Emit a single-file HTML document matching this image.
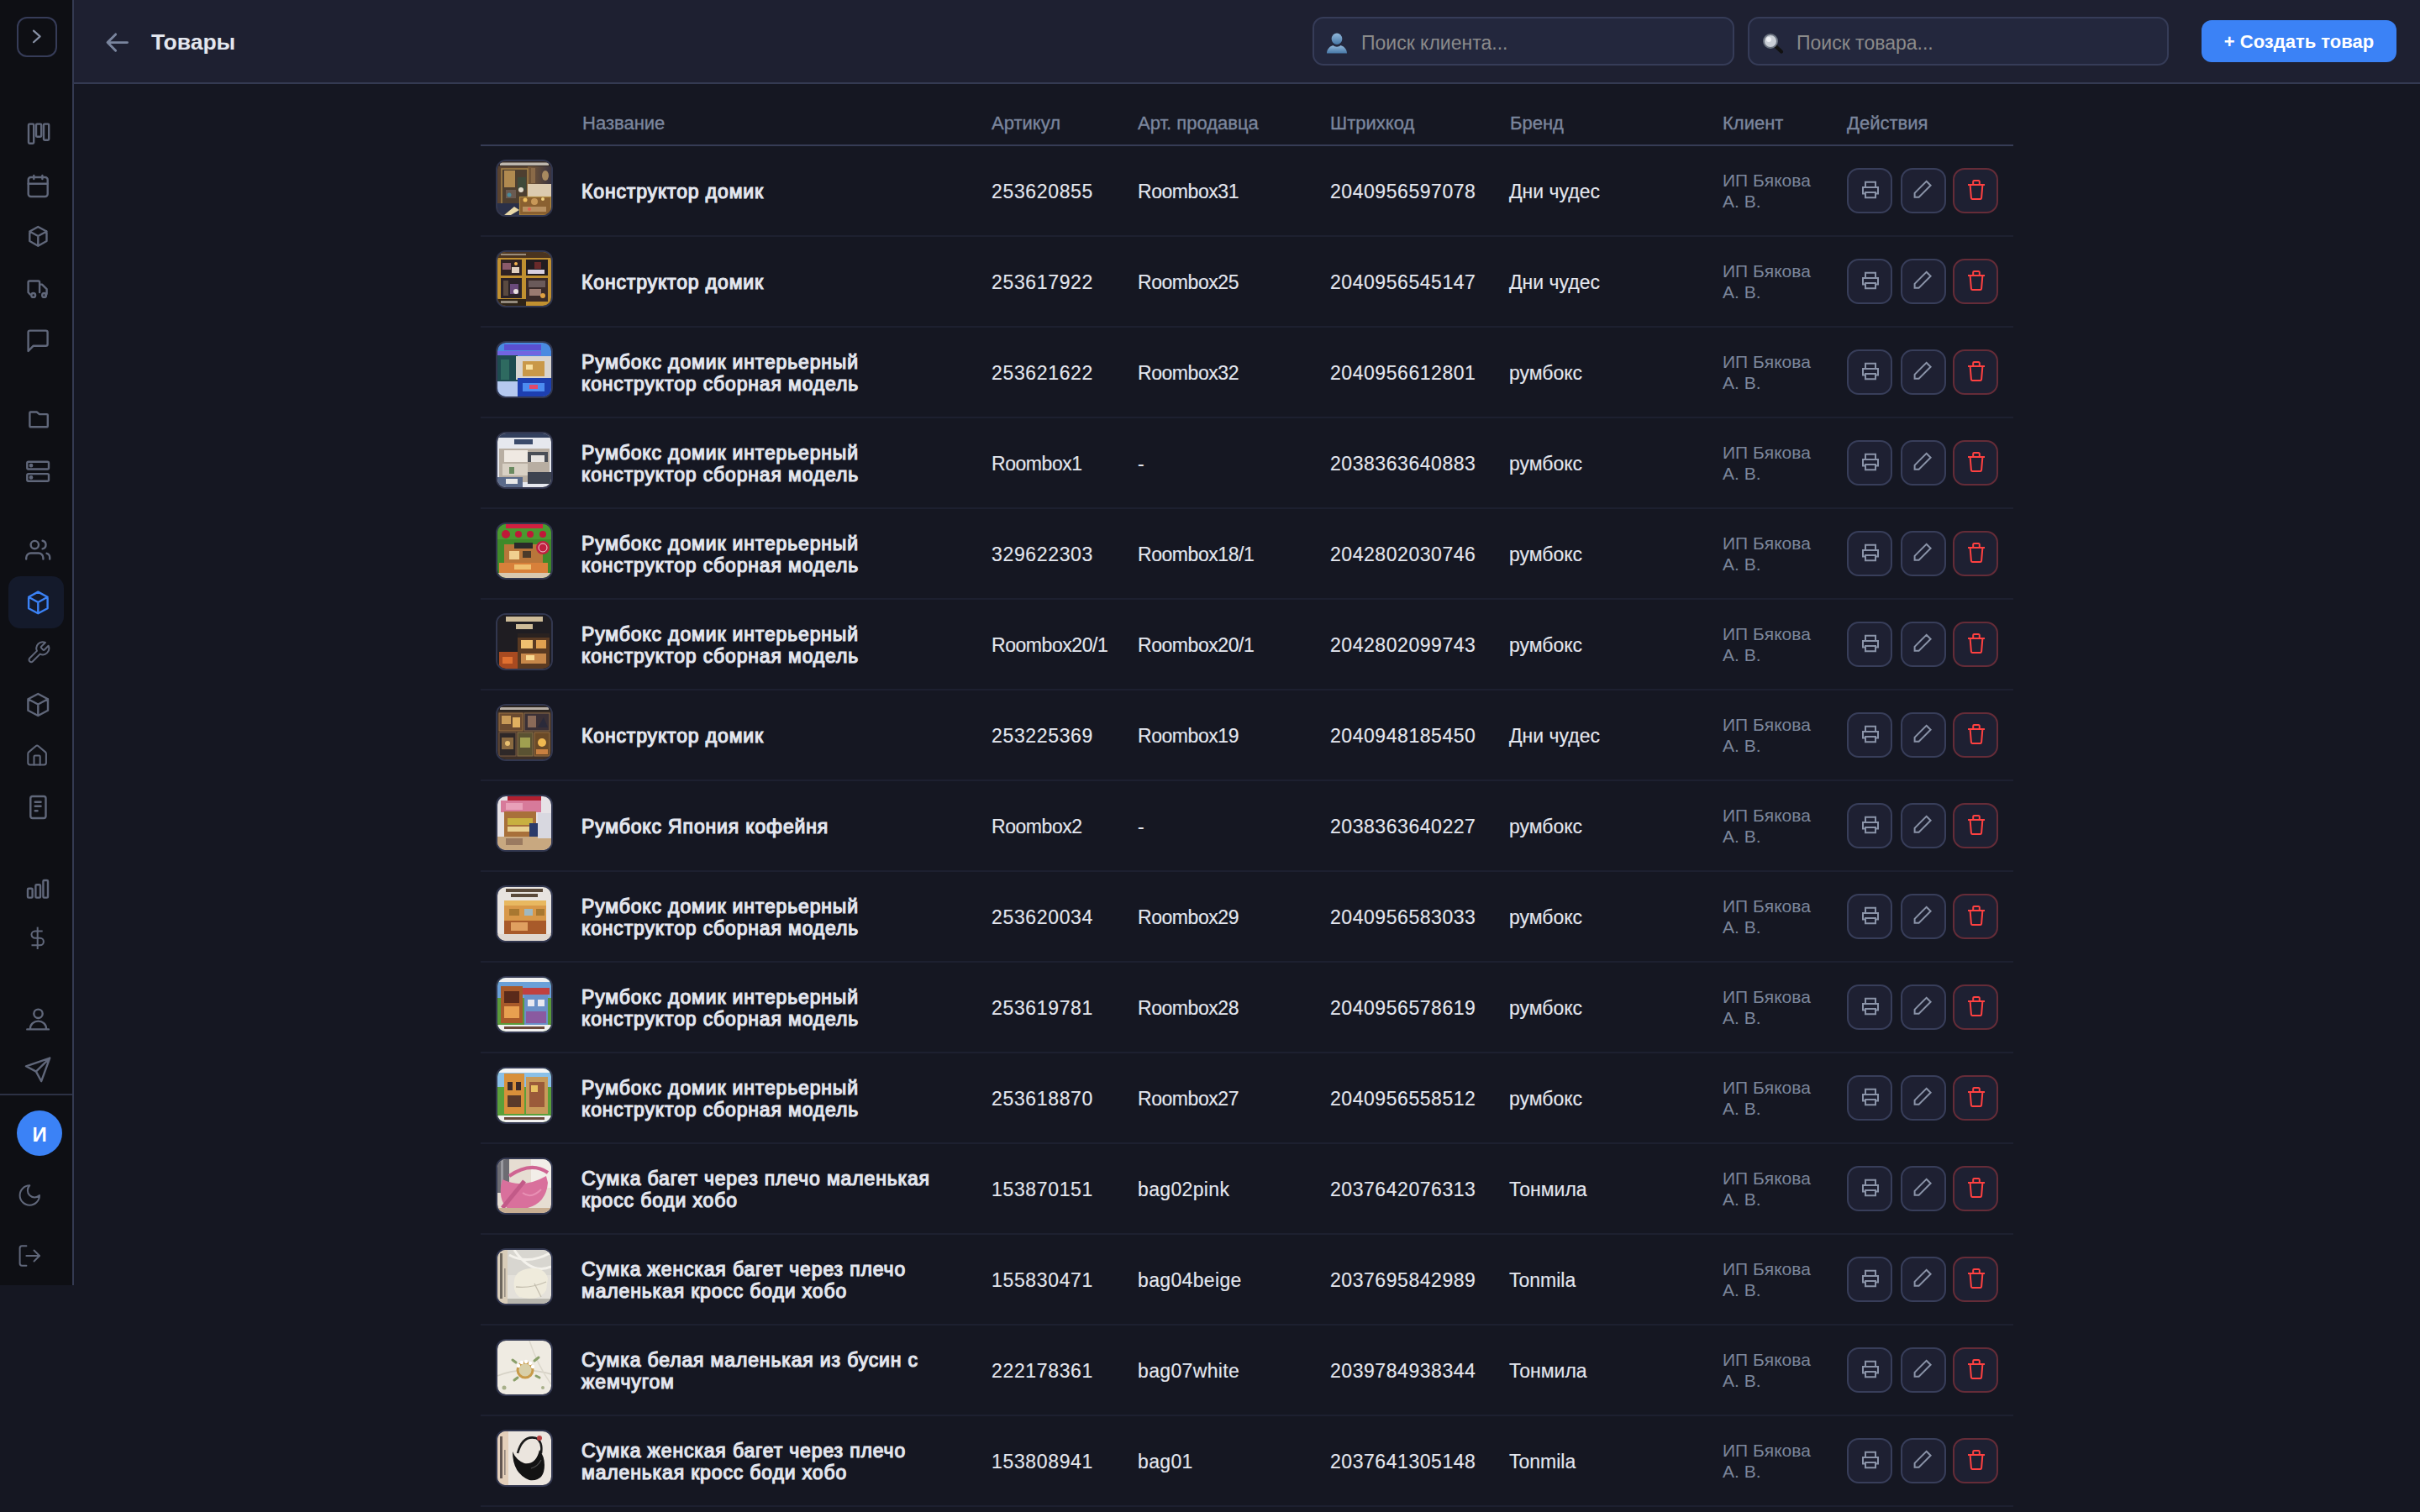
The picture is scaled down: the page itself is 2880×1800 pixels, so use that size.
<!DOCTYPE html>
<html><head><meta charset="utf-8">
<style>
*{box-sizing:border-box;margin:0;padding:0}
html,body{width:2880px;height:1800px;overflow:hidden;background:#151722;font-family:"Liberation Sans",sans-serif}
.side{position:absolute;left:0;top:0;width:88px;height:1530px;background:#0e0f14;border-right:2px solid #343a52}
.side svg{position:absolute;fill:none;stroke:#60677a;stroke-width:2.4;stroke-linecap:round;stroke-linejoin:round}
.tog{position:absolute;left:20px;top:20px;width:48px;height:48px;border:2px solid #363c58;border-radius:12px}
.act{position:absolute;left:10px;top:686px;width:66px;height:62px;border-radius:14px;background:#141a2b}
.sdiv{position:absolute;left:0;top:1302px;width:86px;height:2px;background:#2c3144}
.ava{position:absolute;left:20px;top:1322px;width:54px;height:54px;border-radius:50%;background:#3b82f6;color:#fff;font-weight:700;font-size:24px;text-align:center;line-height:58px}
.hdr{position:absolute;left:88px;top:0;width:2792px;height:100px;background:#1e2031;border-bottom:2px solid #343a52}
.title{position:absolute;left:92px;top:30px;font-size:26.5px;font-weight:700;color:#e3e6ee;line-height:40px;white-space:nowrap}
.inp{position:absolute;top:20px;height:58px;border:2px solid #363c58;border-radius:13px;background:#23273d}
.ph{position:absolute;top:1.5px;line-height:54px;font-size:23px;color:#8b8b8b;white-space:nowrap}
.btnc{position:absolute;left:2620px;top:24px;width:232px;height:50px;border-radius:12px;background:#3b82f6;color:#fff;font-weight:700;font-size:22px;line-height:52px;text-align:center;white-space:nowrap}
.tbl{position:absolute;left:572px;top:0;width:1824px}
.th{position:absolute;top:124px;font-size:22px;color:#7b869d;line-height:46px;white-space:nowrap;-webkit-text-stroke:0.35px #7b869d}
.thline{position:absolute;left:572px;top:172px;width:1824px;height:2px;background:#363c55}
.row{position:absolute;left:572px;width:1824px;height:108px;border-bottom:2px solid #1d2030}
.c{position:absolute;top:1.5px;height:106px;display:flex;align-items:center;font-size:23px;line-height:26.4px;color:#e3e6ee;white-space:nowrap}
.nm{left:120px;font-weight:400;letter-spacing:0.85px}
.c{-webkit-text-stroke:0.15px #e3e6ee}
.nm{-webkit-text-stroke:1.2px #e3e6ee;line-height:26px;top:0.5px}
.a1{left:608px}
.a2{left:782px}
.a3{left:1011px;letter-spacing:.55px}
.dg{letter-spacing:.65px}
.al{letter-spacing:-.45px}
.bg{letter-spacing:.35px}
.a4{left:1224px}
.a5{left:1478px;top:0;font-size:21px;line-height:25.4px;color:#7b869b;-webkit-text-stroke:0}
.th1{position:absolute;left:18px;top:16px;width:68px;height:68px;border:2px solid #32374f;border-radius:12px;overflow:hidden}
.b{position:absolute;top:26px;width:54px;height:54px;border:2px solid #383e5a;border-radius:14px;background:#1e2032}
.b svg{position:absolute;left:0;top:0;fill:none;stroke:#8a93a8;stroke-width:2}
.b1{left:1626px}.b2{left:1690px}.b3{left:1752px;border-color:#652c38}
.b3 svg{stroke:#ff4141}
</style></head><body>
<div class="side">
  <div class="tog"></div>
  <div class="act"></div>
  <div class="sdiv"></div>
  <div class="ava">И</div>
  <svg width="86" height="1530" viewBox="0 0 86 1530" style="left:0;top:0">
    <path d="M40 36.6l7.6 6.8-7.6 6.8" style="stroke:#8790a5;stroke-width:2.2"/>
    <rect x="34" y="147.6" width="6.2" height="23.2" rx="1.2"/>
    <rect x="43" y="147.6" width="6.2" height="15.2" rx="1.2"/>
    <rect x="52" y="147.6" width="6.2" height="19.2" rx="1.2"/>
    <rect x="33.7" y="211" width="23" height="23" rx="3"/>
    <path d="M40.3 209v4M50.4 209v4M33.7 218.7h23"/>
    <path d="M45.3 270l10.2 5.5v11.5l-10.2 5.7-10-5.7v-11.5z M35.3 275.5l10 5.5 10.2-5.5 M45.3 281v11.7"/>
    <path d="M33.6 348v-12a1.5 1.5 0 0 1 1.5-1.5h10.5a1.5 1.5 0 0 1 1.5 1.5v12M47 338.6h3l5.6 5.6v5.6l-1.5 1.5M33.6 348l2.2 2.5"/>
    <circle cx="39.7" cy="351.4" r="2.4"/><circle cx="52.6" cy="351.4" r="2.4"/>
    <path d="M33.6 418V395.6a2 2 0 0 1 2-2h19a2 2 0 0 1 2 2v14.2a2 2 0 0 1-2 2H39.5z"/>
    <path d="M35.4 507.3V491.5a1 1 0 0 1 1-1h7.3l3.2 2.6h8.9a1 1 0 0 1 1 1v13.2a1 1 0 0 1-1 1H36.4a1 1 0 0 1-1-1z"/>
    <rect x="32.3" y="549.8" width="25.7" height="8.7" rx="1.5"/><rect x="32.3" y="564.1" width="25.7" height="8.7" rx="1.5"/>
    <circle cx="37" cy="554.2" r="1.2" style="fill:#646b7e"/><circle cx="37" cy="568.4" r="1.2" style="fill:#646b7e"/>
    <circle cx="41.3" cy="648.6" r="4.7"/><path d="M31.2 665.6v-1.6a5.5 5.5 0 0 1 5.5-5.5h9.2a5.5 5.5 0 0 1 5.5 5.5v1.6M50.6 643.8a4.9 4.9 0 0 1 0 9.6M55.6 658.8a5 5 0 0 1 3.6 4.8v2"/>
    <path d="M45.3 704.6l11.3 6.2v13.4l-11.3 6.1-11.2-6.1v-13.4z M34.1 710.8l11.2 6.2 11.3-6.2 M45.3 717v12.9" style="stroke:#3b82f6;stroke-width:2.4"/>
    <g transform="translate(30.8 761.8) scale(1.25)" style="stroke-width:1.6"><path d="M14.7 6.3a1 1 0 0 0 0 1.4l1.6 1.6a1 1 0 0 0 1.4 0l3.77-3.77a6 6 0 0 1-7.94 7.94l-6.91 6.91a2.12 2.12 0 0 1-3-3l6.91-6.91a6 6 0 0 1 7.94-7.94l-3.76 3.76z"/></g>
    <path d="M45.3 826l11.7 6.2v13.6l-11.7 6.2-11.9-6.2v-13.6z M33.4 832.2l11.9 6.3 11.7-6.3 M45.3 838.5v13.4"/>
    <g transform="translate(29.7 885.2) scale(1.2)" style="stroke-width:1.7"><path d="M15 21v-8a1 1 0 0 0-1-1h-4a1 1 0 0 0-1 1v8"/><path d="M3 10a2 2 0 0 1 .709-1.528l7-5.999a2 2 0 0 1 2.582 0l7 5.999A2 2 0 0 1 21 10v9a2 2 0 0 1-2 2H5a2 2 0 0 1-2-2z"/></g>
    <rect x="36.3" y="948" width="18.2" height="26" rx="2.5"/>
    <path d="M41.7 954.8h6.9M41.7 959.8h6.9M41.7 965.3h2.9"/>
    <rect x="33" y="1057.8" width="5.6" height="10.8" rx="1.2"/><rect x="42.4" y="1053.3" width="5.6" height="15.3" rx="1.2"/><rect x="51.4" y="1048" width="5.6" height="20.6" rx="1.2"/>
    <g transform="translate(30.3 1102.4) scale(1.2)" style="stroke-width:1.7;stroke-linecap:butt"><path d="M12 1v22"/><path d="M17 5H9.5a3.5 3.5 0 0 0 0 7h5a3.5 3.5 0 0 1 0 7H6"/></g>
    <circle cx="45.5" cy="1206.8" r="5.2"/><path d="M36 1224.6a9.5 9 0 0 1 19 0M32.3 1225.4h25.6"/>
    <path d="M31 1269.3L59.2 1259.6L49.2 1287.2L42.9 1275.6Z M42.9 1275.6L59.2 1259.6"/>
    <g transform="translate(19.7 1407.4) scale(1.3)" style="stroke-width:1.55"><path d="M12 3a6 6 0 0 0 9 9 9 9 0 1 1-9-9Z"/></g>
    <g transform="translate(19.7 1479.4) scale(1.3)" style="stroke-width:1.55"><path d="M9 21H5a2 2 0 0 1-2-2V5a2 2 0 0 1 2-2h4"/><path d="m16 17 5-5-5-5"/><path d="M21 12H9"/></g>
  </svg>
</div>
<div class="hdr">
  <svg width="40" height="40" viewBox="0 0 40 40" style="position:absolute;left:32px;top:30px;fill:none;stroke:#7a859e;stroke-width:2.9;stroke-linecap:round;stroke-linejoin:round"><path d="M31.5 20.6H8M17.6 10.9L8 20.6l9.6 9.7"/></svg>
  <div class="title">Товары</div>
</div>
<div class="inp" style="left:1562px;width:502px"><svg width="26" height="26" viewBox="0 0 26 26" style="position:absolute;left:14px;top:17px"><defs><linearGradient id="pg" x1="0" y1="0" x2="0" y2="1"><stop offset="0" stop-color="#93b9dc"/><stop offset="1" stop-color="#4677a6"/></linearGradient></defs><ellipse cx="13" cy="7.2" rx="6.3" ry="6.8" fill="url(#pg)"/><path d="M1 24.5c0-5.5 4.5-8.8 7.5-9.5 1.3 1.2 2.8 1.7 4.5 1.7s3.2-.5 4.5-1.7c3 .7 7.5 4 7.5 9.5z" fill="url(#pg)"/></svg><div class="ph" style="left:56px">Поиск клиента...</div></div>
<div class="inp" style="left:2080px;width:501px"><svg width="26" height="26" viewBox="0 0 26 26" style="position:absolute;left:15px;top:17px"><path d="M15.5 15.5l7.5 7" stroke="#111" stroke-width="4.2" stroke-linecap="round"/><circle cx="10" cy="10" r="8" fill="#c9ced6" stroke="#6b7380" stroke-width="2"/><circle cx="8" cy="8" r="3" fill="#eef0f4"/></svg><div class="ph" style="left:56px">Поиск товара...</div></div>
<div class="btnc">+ Создать товар</div>

<div class="th" style="left:693px">Название</div>
<div class="th" style="left:1180px">Артикул</div>
<div class="th" style="left:1354px">Арт. продавца</div>
<div class="th" style="left:1583px">Штрихкод</div>
<div class="th" style="left:1797px">Бренд</div>
<div class="th" style="left:2050px">Клиент</div>
<div class="th" style="left:2198px">Действия</div>
<div class="thline"></div>
<!--ROWS-->
<div class="row" style="top:174px"><div class="th1"><svg width="64" height="64" viewBox="0 0 64 64"><defs><linearGradient id="g1a" x1="0" x2="1"><stop offset="0" stop-color="#7a5a38"/><stop offset="1" stop-color="#3a3440"/></linearGradient></defs>
<rect width="64" height="64" fill="#5a4330"/>
<rect x="36" y="5" width="28" height="23" fill="url(#g1a)"/><ellipse cx="57" cy="17" rx="4" ry="6" fill="#a88a60"/><rect x="40" y="8" width="5" height="18" fill="#8a6a48"/>
<rect width="64" height="6" fill="#342a26"/><rect x="3" y="1.5" width="58" height="3.5" fill="#e0dad0" opacity=".8"/>
<rect x="5" y="9" width="31" height="43" fill="#4e3f30" stroke="#a88548" stroke-width="1.5"/>
<rect x="8" y="11" width="13" height="20" fill="#b08a50"/><rect x="24" y="19" width="10" height="15" fill="#3e4a3a"/><circle cx="28" cy="34" r="3" fill="#e0d8c8"/><rect x="10" y="34" width="12" height="10" fill="#6a5a50"/><circle cx="14" cy="40" r="2.5" fill="#4a8a9a"/>
<rect x="36" y="27" width="28" height="15" fill="#dccbb0"/>
<rect x="0" y="50" width="27" height="14" fill="#2a3048"/><path d="M8 64 L20 54 L26 58 L16 64Z" fill="#e8d8a8"/>
<rect x="26.5" y="42.5" width="37" height="21.5" fill="#8a6030" stroke="#b08a40" stroke-width="1.2"/>
<circle cx="33" cy="46" r="2.5" fill="#f0c060"/><circle cx="44" cy="48" r="4" fill="#c89858"/><circle cx="54" cy="45" r="2" fill="#f0d080"/><rect x="30" y="54" width="28" height="6" fill="#b89060"/><circle cx="38" cy="57" r="2" fill="#e06050"/></svg></div><div class="c nm">Конструктор домик</div><div class="c a1 dg">253620855</div><div class="c a2 al">Roombox31</div><div class="c a3">2040956597078</div><div class="c a4">Дни чудес</div><div class="c a5">ИП Бякова<br>А. В.</div><div class="b b1"><svg width="50" height="50" viewBox="0 0 50 50"><path d="M20 21V14.7h12V21M20 28.6h-3V21h18v7.6h-3M20 27h12v6.2H20z"/></svg></div><div class="b b2"><svg width="50" height="50" viewBox="0 0 50 50"><path d="M28.6 13.8l5 5-14 14h-5v-5z"/></svg></div><div class="b b3"><svg width="50" height="50" viewBox="0 0 50 50"><path d="M16 18h20M22.2 18v-3.8a1.2 1.2 0 0 1 1.2-1.2h5.2a1.2 1.2 0 0 1 1.2 1.2V18M18.6 18l1.3 15.6a1.5 1.5 0 0 0 1.5 1.3h9.2a1.5 1.5 0 0 0 1.5-1.3L33.4 18"/></svg></div></div>
<div class="row" style="top:282px"><div class="th1"><svg width="64" height="64" viewBox="0 0 64 64"><rect width="64" height="64" fill="#c09030"/>
<rect width="64" height="7" fill="#4a3420"/><rect x="4" y="2" width="30" height="2" fill="#d0c8b8" opacity=".6"/>
<rect x="4" y="9" width="25" height="19" fill="#2e2224"/><rect x="6" y="13" width="10" height="8" fill="#8a5a6a"/><rect x="17" y="18" width="9" height="7" fill="#e0d0c0"/><circle cx="22" cy="14" r="2" fill="#f0b050"/>
<rect x="34" y="9" width="26" height="19" fill="#221c20"/><rect x="36" y="21" width="20" height="5" fill="#d8d0e0"/><rect x="44" y="12" width="8" height="8" fill="#6a2a2a"/>
<rect x="4" y="31" width="25" height="24" fill="#2a2228"/><rect x="7" y="34" width="6" height="18" fill="#5a4a40"/><rect x="15" y="38" width="10" height="12" fill="#6a4a7a"/><circle cx="22" cy="47" r="3" fill="#e8e0e0"/>
<rect x="34" y="31" width="26" height="28" fill="#3a2a28"/><rect x="37" y="34" width="20" height="8" fill="#6a5a5a"/><rect x="38" y="44" width="14" height="8" fill="#9a7a70"/><circle cx="54" cy="52" r="3" fill="#e0a040"/>
<rect x="0" y="56" width="34" height="8" fill="#2e2418"/><rect x="4" y="58" width="20" height="3" fill="#c0b8a8" opacity=".7"/></svg></div><div class="c nm">Конструктор домик</div><div class="c a1 dg">253617922</div><div class="c a2 al">Roombox25</div><div class="c a3">2040956545147</div><div class="c a4">Дни чудес</div><div class="c a5">ИП Бякова<br>А. В.</div><div class="b b1"><svg width="50" height="50" viewBox="0 0 50 50"><path d="M20 21V14.7h12V21M20 28.6h-3V21h18v7.6h-3M20 27h12v6.2H20z"/></svg></div><div class="b b2"><svg width="50" height="50" viewBox="0 0 50 50"><path d="M28.6 13.8l5 5-14 14h-5v-5z"/></svg></div><div class="b b3"><svg width="50" height="50" viewBox="0 0 50 50"><path d="M16 18h20M22.2 18v-3.8a1.2 1.2 0 0 1 1.2-1.2h5.2a1.2 1.2 0 0 1 1.2 1.2V18M18.6 18l1.3 15.6a1.5 1.5 0 0 0 1.5 1.3h9.2a1.5 1.5 0 0 0 1.5-1.3L33.4 18"/></svg></div></div>
<div class="row" style="top:390px"><div class="th1"><svg width="64" height="64" viewBox="0 0 64 64"><rect width="64" height="64" fill="#4a8ae0"/>
<rect x="0" y="14" width="24" height="36" fill="#1e4b50"/><rect x="4" y="20" width="10" height="24" fill="#2e6a60"/>
<rect x="8" y="2" width="44" height="7" fill="#5b4fd0"/><rect x="0" y="10" width="52" height="5" fill="#7264e0"/>
<rect x="22" y="16" width="42" height="28" fill="#d8d4d0"/><rect x="30" y="22" width="26" height="18" fill="#c99848"/><rect x="34" y="26" width="8" height="6" fill="#f8e0a0"/>
<rect x="0" y="46" width="26" height="18" fill="#b5c9ef"/>
<rect x="24" y="42" width="40" height="22" fill="#1d3fb0"/><rect x="30" y="48" width="26" height="10" fill="#4c8cf0"/><rect x="38" y="50" width="10" height="5" fill="#e04a6a"/></svg></div><div class="c nm">Румбокс домик интерьерный<br>конструктор сборная модель</div><div class="c a1 dg">253621622</div><div class="c a2 al">Roombox32</div><div class="c a3">2040956612801</div><div class="c a4">румбокс</div><div class="c a5">ИП Бякова<br>А. В.</div><div class="b b1"><svg width="50" height="50" viewBox="0 0 50 50"><path d="M20 21V14.7h12V21M20 28.6h-3V21h18v7.6h-3M20 27h12v6.2H20z"/></svg></div><div class="b b2"><svg width="50" height="50" viewBox="0 0 50 50"><path d="M28.6 13.8l5 5-14 14h-5v-5z"/></svg></div><div class="b b3"><svg width="50" height="50" viewBox="0 0 50 50"><path d="M16 18h20M22.2 18v-3.8a1.2 1.2 0 0 1 1.2-1.2h5.2a1.2 1.2 0 0 1 1.2 1.2V18M18.6 18l1.3 15.6a1.5 1.5 0 0 0 1.5 1.3h9.2a1.5 1.5 0 0 0 1.5-1.3L33.4 18"/></svg></div></div>
<div class="row" style="top:498px"><div class="th1"><svg width="64" height="64" viewBox="0 0 64 64"><rect width="64" height="64" fill="#e6e8ee"/>
<rect x="0" y="0" width="64" height="5" fill="#33405e"/><rect x="20" y="7" width="22" height="6" fill="#3a4a6a"/>
<rect x="2" y="18" width="60" height="40" fill="#b8aea2"/><rect x="8" y="20" width="28" height="14" fill="#efe9e2"/><rect x="36" y="22" width="24" height="12" fill="#4a4e56"/>
<rect x="40" y="26" width="16" height="8" fill="#e8e4e0"/><rect x="6" y="36" width="30" height="14" fill="#d8d0c4"/><rect x="14" y="40" width="6" height="8" fill="#6a8a60"/>
<rect x="36" y="46" width="28" height="14" fill="#3d4350"/><rect x="0" y="52" width="30" height="12" fill="#5a6a8a"/><rect x="10" y="54" width="14" height="6" fill="#e8e8e8"/></svg></div><div class="c nm">Румбокс домик интерьерный<br>конструктор сборная модель</div><div class="c a1 al">Roombox1</div><div class="c a2 ">-</div><div class="c a3">2038363640883</div><div class="c a4">румбокс</div><div class="c a5">ИП Бякова<br>А. В.</div><div class="b b1"><svg width="50" height="50" viewBox="0 0 50 50"><path d="M20 21V14.7h12V21M20 28.6h-3V21h18v7.6h-3M20 27h12v6.2H20z"/></svg></div><div class="b b2"><svg width="50" height="50" viewBox="0 0 50 50"><path d="M28.6 13.8l5 5-14 14h-5v-5z"/></svg></div><div class="b b3"><svg width="50" height="50" viewBox="0 0 50 50"><path d="M16 18h20M22.2 18v-3.8a1.2 1.2 0 0 1 1.2-1.2h5.2a1.2 1.2 0 0 1 1.2 1.2V18M18.6 18l1.3 15.6a1.5 1.5 0 0 0 1.5 1.3h9.2a1.5 1.5 0 0 0 1.5-1.3L33.4 18"/></svg></div></div>
<div class="row" style="top:606px"><div class="th1"><svg width="64" height="64" viewBox="0 0 64 64"><rect width="64" height="64" fill="#3f8a2a"/><rect x="0" y="0" width="64" height="18" fill="#4a9a30"/>
<rect x="10" y="0" width="44" height="5" fill="#d02040"/>
<circle cx="10" cy="12" r="5" fill="#c01838"/><circle cx="25" cy="12" r="4" fill="#c01838"/><circle cx="39" cy="12" r="4" fill="#c01838"/><circle cx="54" cy="12" r="4" fill="#c01838"/>
<rect x="8" y="24" width="46" height="34" fill="#b8763a"/><rect x="20" y="22" width="22" height="7" fill="#2a2a2a"/><rect x="14" y="32" width="12" height="10" fill="#f0d090"/><rect x="30" y="32" width="10" height="8" fill="#4a3a2a"/>
<rect x="2" y="46" width="58" height="12" fill="#d8803a"/><rect x="20" y="48" width="20" height="6" fill="#f0c070"/>
<circle cx="54" cy="28" r="8" fill="#c02040"/><circle cx="54" cy="28" r="5" fill="none" stroke="#f0d0d8" stroke-width="1"/>
<rect x="0" y="58" width="64" height="6" fill="#d8c8b0"/></svg></div><div class="c nm">Румбокс домик интерьерный<br>конструктор сборная модель</div><div class="c a1 dg">329622303</div><div class="c a2 al">Roombox18/1</div><div class="c a3">2042802030746</div><div class="c a4">румбокс</div><div class="c a5">ИП Бякова<br>А. В.</div><div class="b b1"><svg width="50" height="50" viewBox="0 0 50 50"><path d="M20 21V14.7h12V21M20 28.6h-3V21h18v7.6h-3M20 27h12v6.2H20z"/></svg></div><div class="b b2"><svg width="50" height="50" viewBox="0 0 50 50"><path d="M28.6 13.8l5 5-14 14h-5v-5z"/></svg></div><div class="b b3"><svg width="50" height="50" viewBox="0 0 50 50"><path d="M16 18h20M22.2 18v-3.8a1.2 1.2 0 0 1 1.2-1.2h5.2a1.2 1.2 0 0 1 1.2 1.2V18M18.6 18l1.3 15.6a1.5 1.5 0 0 0 1.5 1.3h9.2a1.5 1.5 0 0 0 1.5-1.3L33.4 18"/></svg></div></div>
<div class="row" style="top:714px"><div class="th1"><svg width="64" height="64" viewBox="0 0 64 64"><rect width="64" height="64" fill="#1f1d22"/>
<rect x="10" y="2" width="44" height="6" fill="#cdbb98"/><rect x="22" y="11" width="20" height="6" fill="#cdbb98"/>
<rect x="24" y="24" width="38" height="40" fill="#5a3a22"/><rect x="24" y="22" width="38" height="5" fill="#2a2220"/>
<rect x="28" y="30" width="14" height="10" fill="#f0c070"/><rect x="46" y="30" width="12" height="10" fill="#e0a050"/>
<rect x="28" y="46" width="30" height="12" fill="#c8884a"/><rect x="34" y="48" width="10" height="6" fill="#f8d890"/>
<rect x="2" y="44" width="22" height="20" fill="#a84a20"/><rect x="6" y="50" width="12" height="8" fill="#e07030"/></svg></div><div class="c nm">Румбокс домик интерьерный<br>конструктор сборная модель</div><div class="c a1 al">Roombox20/1</div><div class="c a2 al">Roombox20/1</div><div class="c a3">2042802099743</div><div class="c a4">румбокс</div><div class="c a5">ИП Бякова<br>А. В.</div><div class="b b1"><svg width="50" height="50" viewBox="0 0 50 50"><path d="M20 21V14.7h12V21M20 28.6h-3V21h18v7.6h-3M20 27h12v6.2H20z"/></svg></div><div class="b b2"><svg width="50" height="50" viewBox="0 0 50 50"><path d="M28.6 13.8l5 5-14 14h-5v-5z"/></svg></div><div class="b b3"><svg width="50" height="50" viewBox="0 0 50 50"><path d="M16 18h20M22.2 18v-3.8a1.2 1.2 0 0 1 1.2-1.2h5.2a1.2 1.2 0 0 1 1.2 1.2V18M18.6 18l1.3 15.6a1.5 1.5 0 0 0 1.5 1.3h9.2a1.5 1.5 0 0 0 1.5-1.3L33.4 18"/></svg></div></div>
<div class="row" style="top:822px"><div class="th1"><svg width="64" height="64" viewBox="0 0 64 64"><rect width="64" height="64" fill="#3e3028"/>
<rect width="64" height="7" fill="#2a2420"/><rect x="3" y="2" width="58" height="3" fill="#d8d0c4" opacity=".8"/>
<rect x="2" y="9" width="28" height="21" fill="#6a4a30" stroke="#9a7040" stroke-width="1"/><rect x="5" y="12" width="11" height="10" fill="#c89a58"/><rect x="18" y="14" width="9" height="12" fill="#e0b060"/>
<rect x="32" y="9" width="30" height="21" fill="#3a3036" stroke="#8a6a48" stroke-width="1"/><rect x="36" y="12" width="10" height="14" fill="#8a6a58"/><path d="M48 26 L55 14 L60 26Z" fill="#2a2a3a"/>
<rect x="2" y="32" width="20" height="28" fill="#2e2828" stroke="#7a5a40" stroke-width="1"/><rect x="5" y="38" width="14" height="14" fill="#8a6a40"/><circle cx="12" cy="45" r="3" fill="#e8c070"/>
<rect x="24" y="32" width="18" height="28" fill="#5a5232" stroke="#8a7048" stroke-width="1"/><rect x="27" y="38" width="12" height="12" fill="#a0a050"/>
<rect x="44" y="32" width="18" height="28" fill="#6a4a28" stroke="#9a7040" stroke-width="1"/><circle cx="53" cy="44" r="5" fill="#f0b850"/><rect x="46" y="52" width="14" height="6" fill="#c88040"/></svg></div><div class="c nm">Конструктор домик</div><div class="c a1 dg">253225369</div><div class="c a2 al">Roombox19</div><div class="c a3">2040948185450</div><div class="c a4">Дни чудес</div><div class="c a5">ИП Бякова<br>А. В.</div><div class="b b1"><svg width="50" height="50" viewBox="0 0 50 50"><path d="M20 21V14.7h12V21M20 28.6h-3V21h18v7.6h-3M20 27h12v6.2H20z"/></svg></div><div class="b b2"><svg width="50" height="50" viewBox="0 0 50 50"><path d="M28.6 13.8l5 5-14 14h-5v-5z"/></svg></div><div class="b b3"><svg width="50" height="50" viewBox="0 0 50 50"><path d="M16 18h20M22.2 18v-3.8a1.2 1.2 0 0 1 1.2-1.2h5.2a1.2 1.2 0 0 1 1.2 1.2V18M18.6 18l1.3 15.6a1.5 1.5 0 0 0 1.5 1.3h9.2a1.5 1.5 0 0 0 1.5-1.3L33.4 18"/></svg></div></div>
<div class="row" style="top:930px"><div class="th1"><svg width="64" height="64" viewBox="0 0 64 64"><rect width="64" height="64" fill="#e6e2e6"/>
<rect x="12" y="0" width="40" height="5" fill="#b02030"/>
<rect x="4" y="5" width="48" height="14" fill="#d77a9a"/><rect x="10" y="8" width="20" height="8" fill="#e8a0b8"/>
<rect x="8" y="18" width="38" height="30" fill="#a8703a"/><rect x="12" y="26" width="30" height="8" fill="#c8b040"/><rect x="12" y="36" width="28" height="6" fill="#e8d090"/>
<rect x="38" y="32" width="10" height="18" fill="#2a3a6a"/>
<rect x="0" y="48" width="64" height="16" fill="#c8a880"/><rect x="10" y="50" width="20" height="8" fill="#9a7a60"/>
<rect x="48" y="20" width="16" height="30" fill="#d8d8e0"/></svg></div><div class="c nm">Румбокс Япония кофейня</div><div class="c a1 al">Roombox2</div><div class="c a2 ">-</div><div class="c a3">2038363640227</div><div class="c a4">румбокс</div><div class="c a5">ИП Бякова<br>А. В.</div><div class="b b1"><svg width="50" height="50" viewBox="0 0 50 50"><path d="M20 21V14.7h12V21M20 28.6h-3V21h18v7.6h-3M20 27h12v6.2H20z"/></svg></div><div class="b b2"><svg width="50" height="50" viewBox="0 0 50 50"><path d="M28.6 13.8l5 5-14 14h-5v-5z"/></svg></div><div class="b b3"><svg width="50" height="50" viewBox="0 0 50 50"><path d="M16 18h20M22.2 18v-3.8a1.2 1.2 0 0 1 1.2-1.2h5.2a1.2 1.2 0 0 1 1.2 1.2V18M18.6 18l1.3 15.6a1.5 1.5 0 0 0 1.5 1.3h9.2a1.5 1.5 0 0 0 1.5-1.3L33.4 18"/></svg></div></div>
<div class="row" style="top:1038px"><div class="th1"><svg width="64" height="64" viewBox="0 0 64 64"><rect width="64" height="64" fill="#e8e4e0"/>
<rect x="10" y="2" width="44" height="4" fill="#5a4a3a"/><rect x="16" y="8" width="32" height="4" fill="#5a4a3a"/>
<rect x="8" y="16" width="50" height="28" fill="#d89848"/><rect x="8" y="16" width="50" height="6" fill="#e8b860"/>
<rect x="14" y="26" width="12" height="8" fill="#a87830"/><rect x="32" y="26" width="10" height="8" fill="#a0b8c0"/><rect x="46" y="26" width="10" height="8" fill="#a87830"/>
<rect x="8" y="40" width="50" height="16" fill="#a85a2a"/><rect x="16" y="42" width="20" height="10" fill="#e0a060"/>
<rect x="0" y="56" width="64" height="8" fill="#e0d8d0"/></svg></div><div class="c nm">Румбокс домик интерьерный<br>конструктор сборная модель</div><div class="c a1 dg">253620034</div><div class="c a2 al">Roombox29</div><div class="c a3">2040956583033</div><div class="c a4">румбокс</div><div class="c a5">ИП Бякова<br>А. В.</div><div class="b b1"><svg width="50" height="50" viewBox="0 0 50 50"><path d="M20 21V14.7h12V21M20 28.6h-3V21h18v7.6h-3M20 27h12v6.2H20z"/></svg></div><div class="b b2"><svg width="50" height="50" viewBox="0 0 50 50"><path d="M28.6 13.8l5 5-14 14h-5v-5z"/></svg></div><div class="b b3"><svg width="50" height="50" viewBox="0 0 50 50"><path d="M16 18h20M22.2 18v-3.8a1.2 1.2 0 0 1 1.2-1.2h5.2a1.2 1.2 0 0 1 1.2 1.2V18M18.6 18l1.3 15.6a1.5 1.5 0 0 0 1.5 1.3h9.2a1.5 1.5 0 0 0 1.5-1.3L33.4 18"/></svg></div></div>
<div class="row" style="top:1146px"><div class="th1"><svg width="64" height="64" viewBox="0 0 64 64"><rect width="64" height="64" fill="#5a9a3a"/><rect width="64" height="24" fill="#6aa0d8"/>
<rect x="4" y="10" width="26" height="44" fill="#a85a2a"/><rect x="8" y="16" width="18" height="14" fill="#5a2a1a"/><rect x="8" y="34" width="18" height="14" fill="#e8a050"/>
<rect x="30" y="12" width="32" height="8" fill="#c04040"/><rect x="32" y="20" width="28" height="36" fill="#6a90c8"/><rect x="36" y="26" width="8" height="8" fill="#e8e8f0"/><rect x="48" y="26" width="8" height="8" fill="#e8e8f0"/>
<rect x="34" y="40" width="24" height="14" fill="#8a5aa0"/>
<rect x="0" y="0" width="64" height="5" fill="#f0f0f0"/><rect x="0" y="56" width="64" height="8" fill="#f0f0f0"/><rect x="8" y="58" width="48" height="3" fill="#6a4a3a"/></svg></div><div class="c nm">Румбокс домик интерьерный<br>конструктор сборная модель</div><div class="c a1 dg">253619781</div><div class="c a2 al">Roombox28</div><div class="c a3">2040956578619</div><div class="c a4">румбокс</div><div class="c a5">ИП Бякова<br>А. В.</div><div class="b b1"><svg width="50" height="50" viewBox="0 0 50 50"><path d="M20 21V14.7h12V21M20 28.6h-3V21h18v7.6h-3M20 27h12v6.2H20z"/></svg></div><div class="b b2"><svg width="50" height="50" viewBox="0 0 50 50"><path d="M28.6 13.8l5 5-14 14h-5v-5z"/></svg></div><div class="b b3"><svg width="50" height="50" viewBox="0 0 50 50"><path d="M16 18h20M22.2 18v-3.8a1.2 1.2 0 0 1 1.2-1.2h5.2a1.2 1.2 0 0 1 1.2 1.2V18M18.6 18l1.3 15.6a1.5 1.5 0 0 0 1.5 1.3h9.2a1.5 1.5 0 0 0 1.5-1.3L33.4 18"/></svg></div></div>
<div class="row" style="top:1254px"><div class="th1"><svg width="64" height="64" viewBox="0 0 64 64"><rect width="64" height="64" fill="#5aa03a"/><rect width="64" height="22" fill="#8ac0e8"/>
<rect x="8" y="6" width="24" height="48" fill="#d8903a"/><rect x="12" y="16" width="6" height="10" fill="#3a2a2a"/><rect x="22" y="16" width="6" height="10" fill="#3a2a2a"/><rect x="12" y="32" width="16" height="14" fill="#5a3a2a"/>
<rect x="34" y="10" width="26" height="44" fill="#c89a5a"/><rect x="38" y="16" width="18" height="30" fill="#9a5a3a"/><rect x="40" y="20" width="8" height="8" fill="#e8c060"/>
<rect x="0" y="0" width="64" height="5" fill="#f4f4f4"/><rect x="0" y="56" width="64" height="8" fill="#f0f0f0"/><rect x="8" y="58" width="48" height="3" fill="#6a4a3a"/></svg></div><div class="c nm">Румбокс домик интерьерный<br>конструктор сборная модель</div><div class="c a1 dg">253618870</div><div class="c a2 al">Roombox27</div><div class="c a3">2040956558512</div><div class="c a4">румбокс</div><div class="c a5">ИП Бякова<br>А. В.</div><div class="b b1"><svg width="50" height="50" viewBox="0 0 50 50"><path d="M20 21V14.7h12V21M20 28.6h-3V21h18v7.6h-3M20 27h12v6.2H20z"/></svg></div><div class="b b2"><svg width="50" height="50" viewBox="0 0 50 50"><path d="M28.6 13.8l5 5-14 14h-5v-5z"/></svg></div><div class="b b3"><svg width="50" height="50" viewBox="0 0 50 50"><path d="M16 18h20M22.2 18v-3.8a1.2 1.2 0 0 1 1.2-1.2h5.2a1.2 1.2 0 0 1 1.2 1.2V18M18.6 18l1.3 15.6a1.5 1.5 0 0 0 1.5 1.3h9.2a1.5 1.5 0 0 0 1.5-1.3L33.4 18"/></svg></div></div>
<div class="row" style="top:1362px"><div class="th1"><svg width="64" height="64" viewBox="0 0 64 64"><rect width="64" height="64" fill="#e6ddd2"/><rect x="0" y="0" width="14" height="40" fill="#6c6c72"/><rect x="4" y="0" width="3" height="40" fill="#9a9aa0"/><rect x="40" y="0" width="24" height="34" fill="#f2eee8"/>
<path d="M6 24 Q30 36 58 20 L60 28 Q58 52 36 58 L14 60 Q2 52 4 32Z" fill="#d9709c"/>
<path d="M14 20 Q40 2 60 16" stroke="#cf6492" stroke-width="4" fill="none"/>
<path d="M6 58 L32 26" stroke="#c25a88" stroke-width="5"/>
<path d="M30 40 Q40 48 52 36" stroke="#e890b4" stroke-width="2" fill="none"/>
<rect x="0" y="58" width="64" height="6" fill="#c8ae92"/></svg></div><div class="c nm">Сумка багет через плечо маленькая<br>кросс боди хобо</div><div class="c a1 dg">153870151</div><div class="c a2 bg">bag02pink</div><div class="c a3">2037642076313</div><div class="c a4">Тонмила</div><div class="c a5">ИП Бякова<br>А. В.</div><div class="b b1"><svg width="50" height="50" viewBox="0 0 50 50"><path d="M20 21V14.7h12V21M20 28.6h-3V21h18v7.6h-3M20 27h12v6.2H20z"/></svg></div><div class="b b2"><svg width="50" height="50" viewBox="0 0 50 50"><path d="M28.6 13.8l5 5-14 14h-5v-5z"/></svg></div><div class="b b3"><svg width="50" height="50" viewBox="0 0 50 50"><path d="M16 18h20M22.2 18v-3.8a1.2 1.2 0 0 1 1.2-1.2h5.2a1.2 1.2 0 0 1 1.2 1.2V18M18.6 18l1.3 15.6a1.5 1.5 0 0 0 1.5 1.3h9.2a1.5 1.5 0 0 0 1.5-1.3L33.4 18"/></svg></div></div>
<div class="row" style="top:1470px"><div class="th1"><svg width="64" height="64" viewBox="0 0 64 64"><rect width="64" height="64" fill="#e4e1da"/><rect x="12" y="0" width="52" height="30" fill="#d8d6d0"/>
<path d="M14 6 Q36 18 62 4 M20 0 Q40 30 64 20" stroke="#f4f2ec" stroke-width="3" fill="none"/>
<rect x="0" y="0" width="12" height="64" fill="#d9cdb9"/>
<rect x="3" y="4" width="3" height="54" fill="#4a4440" opacity=".75"/><rect x="8" y="22" width="1.6" height="34" fill="#6a6460" opacity=".6"/>
<path d="M20 36 Q22 24 38 22 Q56 20 60 34 L58 48 Q52 58 38 58 L26 56 Q18 50 20 36Z" fill="#efebdc"/>
<path d="M22 44 Q40 46 58 38" stroke="#c4beae" stroke-width="1.3" fill="none"/><path d="M44 40 L52 56" stroke="#c4beae" stroke-width="1.3"/>
<rect x="12" y="58" width="52" height="6" fill="#b8b6ae"/></svg></div><div class="c nm">Сумка женская багет через плечо<br>маленькая кросс боди хобо</div><div class="c a1 dg">155830471</div><div class="c a2 bg">bag04beige</div><div class="c a3">2037695842989</div><div class="c a4">Tonmila</div><div class="c a5">ИП Бякова<br>А. В.</div><div class="b b1"><svg width="50" height="50" viewBox="0 0 50 50"><path d="M20 21V14.7h12V21M20 28.6h-3V21h18v7.6h-3M20 27h12v6.2H20z"/></svg></div><div class="b b2"><svg width="50" height="50" viewBox="0 0 50 50"><path d="M28.6 13.8l5 5-14 14h-5v-5z"/></svg></div><div class="b b3"><svg width="50" height="50" viewBox="0 0 50 50"><path d="M16 18h20M22.2 18v-3.8a1.2 1.2 0 0 1 1.2-1.2h5.2a1.2 1.2 0 0 1 1.2 1.2V18M18.6 18l1.3 15.6a1.5 1.5 0 0 0 1.5 1.3h9.2a1.5 1.5 0 0 0 1.5-1.3L33.4 18"/></svg></div></div>
<div class="row" style="top:1578px"><div class="th1"><svg width="64" height="64" viewBox="0 0 64 64"><rect width="64" height="64" fill="#efebe2"/>
<path d="M0 42 Q30 30 64 40" stroke="#d6d2c6" stroke-width="1.8" fill="none"/><path d="M38 0 Q48 30 64 52" stroke="#dcd8cc" stroke-width="1.5" fill="none"/>
<path d="M22 26 l-4 -3 M44 24 l5 -4 M24 44 l-4 3 M46 42 l4 2" stroke="#8a9f6a" stroke-width="3" stroke-linecap="round"/>
<circle cx="8" cy="56" r="2.5" fill="#a8b08a"/><circle cx="54" cy="56" r="2" fill="#a8b08a"/>
<circle cx="33" cy="35" r="9" fill="#d8cfa8" stroke="#c89a48" stroke-width="3"/>
<circle cx="25" cy="30" r="2.2" fill="#fff"/><circle cx="29" cy="26" r="2.2" fill="#fff"/><circle cx="34" cy="25" r="2.2" fill="#fff"/><circle cx="39" cy="27" r="2.2" fill="#fff"/><circle cx="42" cy="31" r="2.2" fill="#fff"/></svg></div><div class="c nm">Сумка белая маленькая из бусин с<br>жемчугом</div><div class="c a1 dg">222178361</div><div class="c a2 bg">bag07white</div><div class="c a3">2039784938344</div><div class="c a4">Тонмила</div><div class="c a5">ИП Бякова<br>А. В.</div><div class="b b1"><svg width="50" height="50" viewBox="0 0 50 50"><path d="M20 21V14.7h12V21M20 28.6h-3V21h18v7.6h-3M20 27h12v6.2H20z"/></svg></div><div class="b b2"><svg width="50" height="50" viewBox="0 0 50 50"><path d="M28.6 13.8l5 5-14 14h-5v-5z"/></svg></div><div class="b b3"><svg width="50" height="50" viewBox="0 0 50 50"><path d="M16 18h20M22.2 18v-3.8a1.2 1.2 0 0 1 1.2-1.2h5.2a1.2 1.2 0 0 1 1.2 1.2V18M18.6 18l1.3 15.6a1.5 1.5 0 0 0 1.5 1.3h9.2a1.5 1.5 0 0 0 1.5-1.3L33.4 18"/></svg></div></div>
<div class="row" style="top:1686px"><div class="th1"><svg width="64" height="64" viewBox="0 0 64 64"><rect width="64" height="64" fill="#ebe5de"/><rect x="0" y="0" width="13" height="64" fill="#e3cfba"/>
<rect x="3" y="6" width="3" height="50" fill="#3a3030" opacity=".75"/><rect x="8" y="22" width="1.6" height="30" fill="#5a5050" opacity=".6"/>
<path d="M24 26 Q30 4 46 8 Q54 12 52 26" stroke="#1a1a1a" stroke-width="2.5" fill="none"/>
<path d="M18 24 Q18 50 38 58 Q56 60 56 40 Q56 30 50 22 Q46 40 32 38 Q22 34 18 24Z" fill="#131313"/>
<path d="M40 44 Q48 42 52 34" stroke="#4a4a4a" stroke-width="1.2" fill="none"/>
<circle cx="50" cy="8" r="3" fill="#b84040"/></svg></div><div class="c nm">Сумка женская багет через плечо<br>маленькая кросс боди хобо</div><div class="c a1 dg">153808941</div><div class="c a2 bg">bag01</div><div class="c a3">2037641305148</div><div class="c a4">Tonmila</div><div class="c a5">ИП Бякова<br>А. В.</div><div class="b b1"><svg width="50" height="50" viewBox="0 0 50 50"><path d="M20 21V14.7h12V21M20 28.6h-3V21h18v7.6h-3M20 27h12v6.2H20z"/></svg></div><div class="b b2"><svg width="50" height="50" viewBox="0 0 50 50"><path d="M28.6 13.8l5 5-14 14h-5v-5z"/></svg></div><div class="b b3"><svg width="50" height="50" viewBox="0 0 50 50"><path d="M16 18h20M22.2 18v-3.8a1.2 1.2 0 0 1 1.2-1.2h5.2a1.2 1.2 0 0 1 1.2 1.2V18M18.6 18l1.3 15.6a1.5 1.5 0 0 0 1.5 1.3h9.2a1.5 1.5 0 0 0 1.5-1.3L33.4 18"/></svg></div></div>
<!--/ROWS-->
</body></html>
